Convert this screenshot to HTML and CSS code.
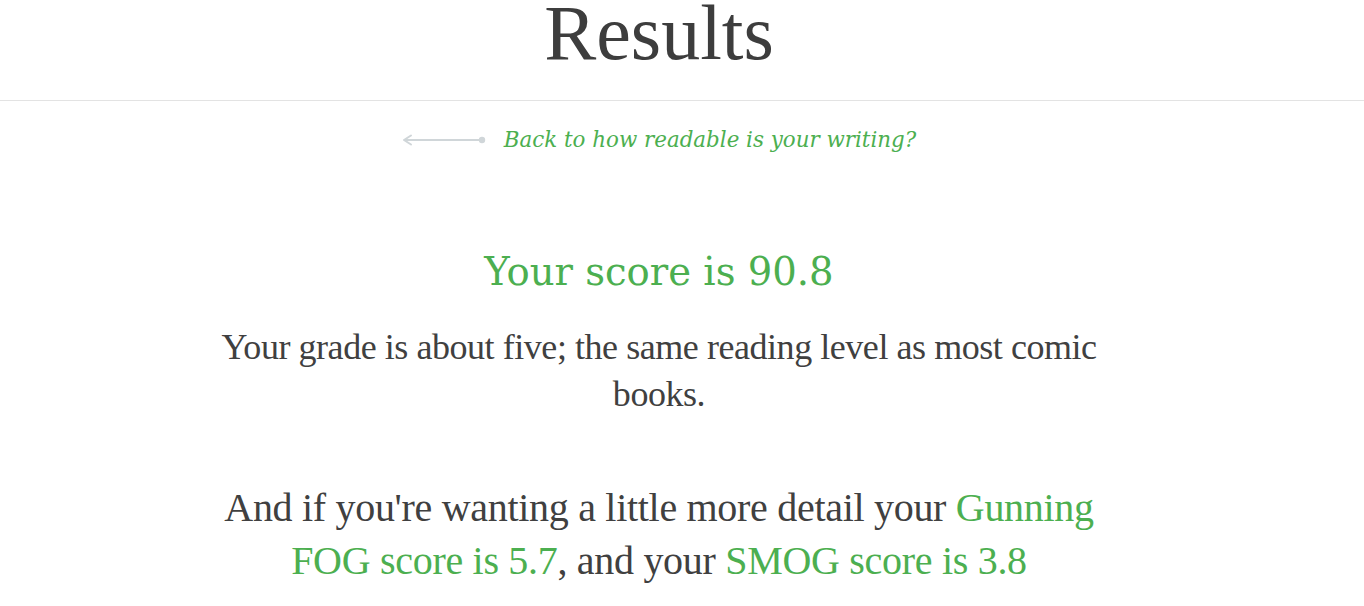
FILE: index.html
```html
<!DOCTYPE html>
<html lang="en">
<head>
<meta charset="utf-8">
<title>Results</title>
<link rel="stylesheet" href="styles.css">
</head>
<body>
<header class="page-header">
  <h1 class="title">Results</h1>
</header>
<main class="main">
  <div class="column">
    <p class="back">
      <svg class="back-arrow" width="84" height="14" viewBox="0 0 84 14" aria-hidden="true">
        <path d="M2 7 H80" stroke="#d0d6d9" stroke-width="2" fill="none"/>
        <path d="M9 2.5 L2 7 L9 11.5" stroke="#d0d6d9" stroke-width="2" fill="none" stroke-linecap="round" stroke-linejoin="round"/>
        <circle cx="80" cy="7" r="3.2" fill="#d0d6d9"/>
      </svg>
      <a class="back-link" href="#">Back to how readable is your writing?</a>
    </p>
    <h2 class="score">Your score is 90.8</h2>
    <p class="grade">Your grade is about five; the same reading level as most comic books.</p>
    <p class="detail">And if you're wanting a little more detail your <a class="hl" href="#">Gunning FOG score is 5.7</a>, and your <a class="hl" href="#">SMOG score is 3.8</a></p>
  </div>
</main>
</body>
</html>
```
FILE: styles.css
```css
html, body {
  margin: 0;
  padding: 0;
  background: #ffffff;
}
body {
  font-family: "Liberation Serif", "Times New Roman", serif;
  color: #404040;
}
.page-header {
  border-bottom: 1px solid #e3e3e3;
  padding-top: 0;
  padding-bottom: 34px;
  padding-right: 46px;
  text-align: center;
}
.title {
  margin: 0;
  font-size: 78px;
  line-height: 66px;
  font-weight: normal;
  color: #3d3d3d;
}
.main {
  padding-right: 46px;
}
.column {
  width: 900px;
  margin: 0 auto;
  text-align: center;
}
.back {
  margin: 24px 0 0;
  font-size: 21.4px;
  line-height: 30px;
  display: flex;
  align-items: center;
  justify-content: center;
  gap: 18px;
}
.back-arrow {
  display: block;
}
.back-link {
  font-family: "DejaVu Serif", "Liberation Serif", serif;
  font-style: italic;
  color: #4caf50;
  text-decoration: none;
}
.score {
  margin: 89px 0 0;
  font-family: "DejaVu Serif", "Liberation Serif", serif;
  font-size: 38.6px;
  line-height: 56px;
  font-weight: normal;
  color: #4caf50;
}
.grade {
  margin: 24px 0 0;
  font-size: 36px;
  line-height: 47px;
  letter-spacing: -0.45px;
}
.detail {
  margin: 63px 0 0;
  font-size: 40px;
  line-height: 53px;
  letter-spacing: -0.3px;
}
.hl {
  color: #4caf50;
  text-decoration: none;
}
```
